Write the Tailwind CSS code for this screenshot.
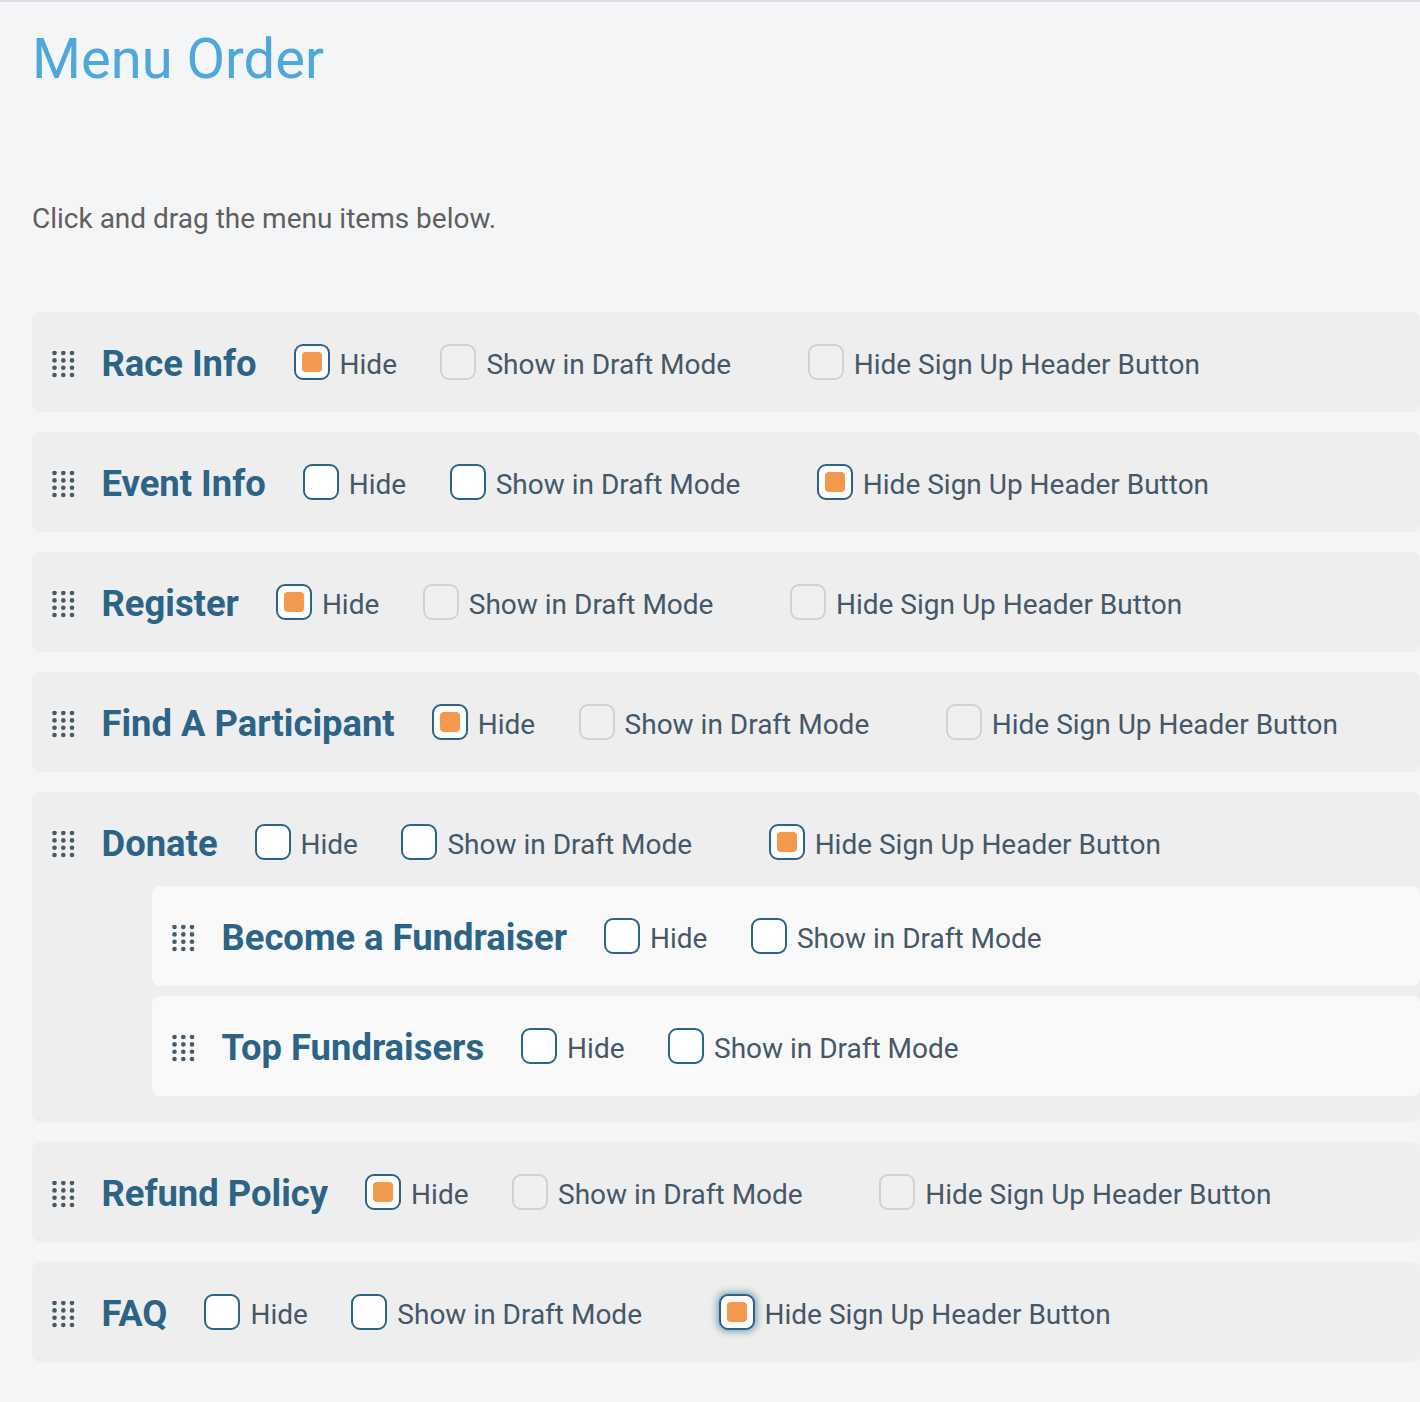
<!DOCTYPE html>
<html lang="en">

<head>
    <meta charset="UTF-8" />
    <meta name="viewport" content="width=device-width, initial-scale=1" />
    <title>Menu Order</title>
    <script src="https://cdn.jsdelivr.net/npm/@tailwindcss/browser@4"></script>
</head>

<body class="bg-[#f4f5f7] font-['Roboto',sans-serif] overflow-hidden">
    <div class="h-[2px] bg-[#dcdde0]"></div>

    <main class="pl-[32px] h-[1400px]">
        <h1 class="text-[#4fa8dc] text-[56.1px] leading-[64px] pt-[25px]">Menu Order</h1>
        <p class="text-[#5f5f5f] text-[28px] leading-[40px] mt-[108px]">Click and drag the menu items below.</p>

        <div id="menu-list" class="mt-[73px] flex flex-col gap-[20px]"></div>
    </main>

    <script>
        const grip = `<svg width="24" height="28" viewBox="0 0 24 28" class="shrink-0 translate-y-[3px] fill-[#465b6a]">
            ${[2, 9.4, 16.7, 24].map(y => [2.5, 11.3, 20].map(x => `<circle cx="${x}" cy="${y}" r="2.3"></circle>`).join('')).join('')}
        </svg>`;

        // on = ticked, off = enabled, dis = greyed out, focus = ticked with focus glow
        function checkbox(state) {
            if (state === 'dis') {
                return '<span class="w-[36px] h-[36px] shrink-0 rounded-[9px] border-2 border-[#d2d2d2] bg-[#f0f0f0]"></span>';
            }
            const glow = state === 'focus' ? 'shadow-[0_0_7px_2px_rgba(43,100,135,0.55)]' : '';
            const dot = state === 'off' ? '' : '<span class="w-[20px] h-[20px] rounded-[4px] bg-[#f2994c]"></span>';
            return `<span class="w-[36px] h-[36px] shrink-0 rounded-[9px] border-2 border-[#2b6487] bg-white flex items-center justify-center ${glow}">${dot}</span>`;
        }

        function option(state, text, cls) {
            return `<label class="flex items-center ${cls}">${checkbox(state)}<span class="text-[#44586a] text-[28px] leading-[40px] ml-[10px] translate-y-[3px] whitespace-nowrap">${text}</span></label>`;
        }

        function row(item, bg) {
            const [hide, draft, header] = item.states;
            return `<div class="h-[100px] flex items-center pl-[20px] rounded-[8px] ${bg}">
                ${grip}
                <span class="text-[#2b6487] font-bold text-[36.4px] leading-[44px] ml-[26px] mr-[36.5px] -translate-x-[0.5px] translate-y-[2px] whitespace-nowrap">${item.name}</span>
                ${option(hide, 'Hide', 'mr-[43.5px]')}
                ${option(draft, 'Show in Draft Mode', 'mr-[76.5px]')}
                ${header ? option(header, 'Hide Sign Up Header Button', '') : ''}
            </div>`;
        }

        const items = [
            { name: 'Race Info', states: ['on', 'dis', 'dis'] },
            { name: 'Event Info', states: ['off', 'off', 'on'] },
            { name: 'Register', states: ['on', 'dis', 'dis'] },
            { name: 'Find A Participant', states: ['on', 'dis', 'dis'] },
            {
                name: 'Donate', states: ['off', 'off', 'on'], children: [
                    { name: 'Become a Fundraiser', states: ['off', 'off'] },
                    { name: 'Top Fundraisers', states: ['off', 'off'] }
                ]
            },
            { name: 'Refund Policy', states: ['on', 'dis', 'dis'] },
            { name: 'FAQ', states: ['off', 'off', 'focus'] }
        ];

        document.getElementById('menu-list').innerHTML = items.map(item => {
            if (!item.children) return row(item, 'bg-[#eeeeee]');
            return `<div class="rounded-[8px] bg-[#eeeeee] pb-[26px]">
                <div class="-mb-[6px]">${row(item, '')}</div>
                <div class="ml-[120px] flex flex-col gap-[10px]">${item.children.map(c => row(c, 'bg-[#f9f9f9]')).join('')}</div>
            </div>`;
        }).join('');
    </script>
</body>

</html>
